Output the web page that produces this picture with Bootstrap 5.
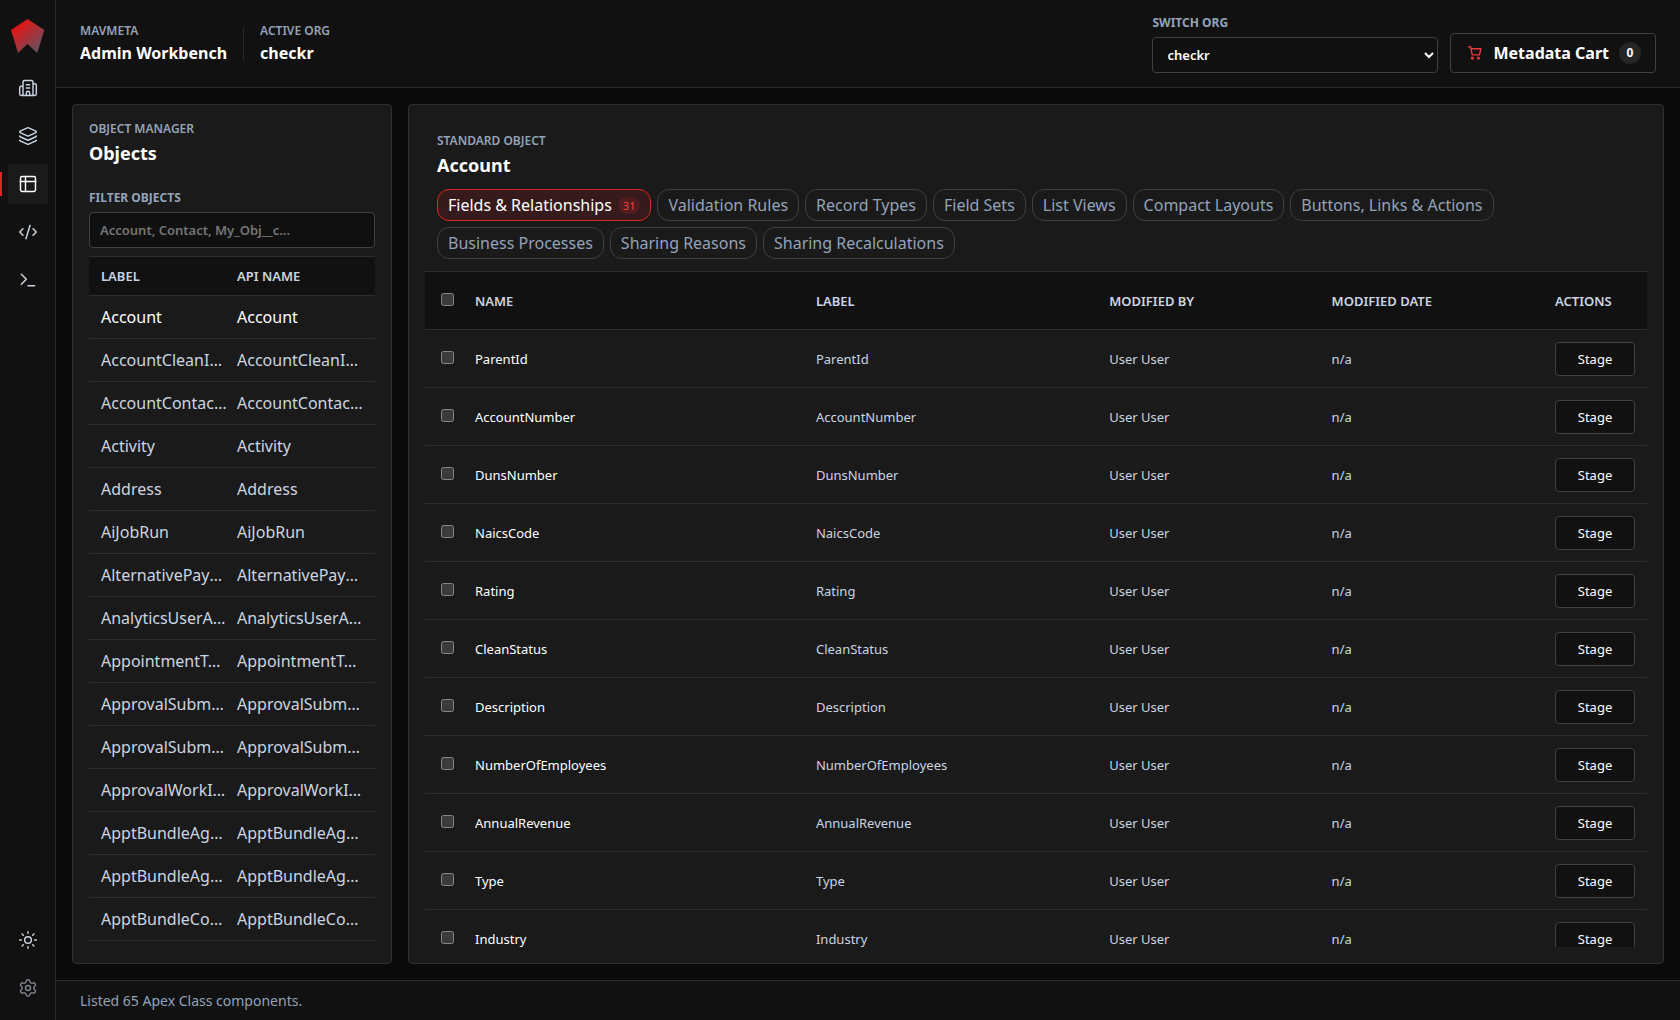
<!DOCTYPE html>
<html lang="en" data-bs-theme="dark">
<head>
<meta charset="utf-8">
<meta name="viewport" content="width=device-width, initial-scale=1">
<title>MavMeta Admin Workbench</title>
<link rel="stylesheet" href="https://cdn.jsdelivr.net/npm/bootstrap@5.3.0/dist/css/bootstrap.min.css">
<style>
  :root { color-scheme: dark; --line: #2a2a2a; --line-strong: #3f3f46; --bar: #111111; --panel: #1a1a1a; --muted: #94a3b8; --text: #cbd5e1; --accent: #dc2626; }
  body { background: #0a0a0a; color: var(--text); font-family: "Noto Sans", sans-serif; font-size: 16px; line-height: 24px; }
  svg { display: block; fill: none; stroke: currentColor; stroke-linecap: round; stroke-linejoin: round; }
  .shrinkable { min-width: 0; min-height: 0; }
  .rail { flex: 0 0 56px; background: var(--bar); border-right: 1px solid var(--line); padding: 18px 0 12px 8px; }
  .rail-logo { margin: 0 0 14px 1px; }
  .rail-link { display: flex; align-items: center; justify-content: center; width: 40px; height: 40px; border: 0; border-radius: 4px; background: none; color: var(--text); position: relative; padding: 0; }
  .rail-link svg { width: 20px; height: 20px; stroke-width: 1.75; }
  .rail-link.active { background: var(--panel); color: #fff; }
  .rail-link.active::before { content: ""; position: absolute; left: -8px; top: 8px; bottom: 8px; width: 2px; background: var(--accent); }
  .rail-link.dim { color: #7b8088; }
  .topbar { background: var(--bar); border-bottom: 1px solid var(--line); height: 88px; padding: 0 24px; }
  .eyebrow { font-size: 12px; line-height: 16px; font-weight: 600; color: var(--muted); text-transform: uppercase; margin: 0; }
  .field-label { font-size: 12px; line-height: 18px; font-weight: 700; color: var(--muted); text-transform: uppercase; margin: 0 0 5px; }
  .bar-title { font-size: 16px; line-height: 24px; font-weight: 700; color: #fff; margin: 2px 0 0; }
  .bar-rule { width: 1px; height: 32px; background: var(--line); }
  .control { background: #101010; border: 1px solid var(--line-strong); border-radius: 4px; color: #fff; font-size: 13px; font-weight: 600; height: 36px; padding: 0 10px; }
  .control::placeholder { color: #757575; opacity: 1; }
  .top-actions { gap: 12px; }
  .org-select { width: 286px; }
  .cart-btn { gap: 10px; height: 40px; background: var(--bar); border: 1px solid var(--line-strong); border-radius: 4px; color: #fff; font-weight: 700; padding: 0 14px 0 16px; }
  .cart-btn svg { width: 16px; height: 16px; stroke: #e5393b; }
  .cart-count { width: 22px; height: 22px; border-radius: 11px; background: #262626; font-size: 12px; line-height: 22px; text-align: center; }
  .panel { background: var(--panel); border: 1px solid #2e2e2e; border-radius: 4px; padding: 16px; }
  .panel-side { flex: 0 0 320px; }
  .panel-title { font-size: 18px; line-height: 24px; font-weight: 700; color: #fff; margin: 4px 0 0; }
  .clip { overflow: hidden; min-height: 0; flex: 1 1 0; }
  .grid { width: 100%; table-layout: fixed; border-collapse: separate; border-spacing: 0; }
  .grid th, .grid td { padding: 0 5px; border-bottom: 1px solid #2e2e2e; overflow: hidden; white-space: nowrap; text-overflow: ellipsis; vertical-align: middle; }
  .grid th { background: var(--bar); border-top: 1px solid #2e2e2e; font-size: 13px; font-weight: 600; text-transform: uppercase; color: var(--text); }
  .grid tr > :first-child { padding-left: 12px; }
  .grid tr > :last-child { padding-right: 12px; }
  .objects th { height: 40px; }
  .objects td { height: 43px; }
  .objects .current td { color: #fff; }
  .fields th { height: 59px; }
  .fields td { height: 58px; font-size: 13px; }
  .fields td:nth-child(2) { color: #fff; }
  .fields input { margin: 3px 3px 3px 4px; }
  .w-check { width: 45px; }
  .w-name { width: 27.9%; }
  .w-label { width: 24%; }
  .w-by { width: 18.2%; }
  .w-act { width: 97px; }
  .stage-btn { display: block; width: 80px; height: 34px; background: var(--bar); border: 1px solid var(--line-strong); border-radius: 4px; color: #fff; font-size: 13px; padding: 0; }
  .object-head { padding: 12px; }
  .tabs { gap: 6px; margin-top: 12px; }
  .tab-btn { display: flex; align-items: center; gap: 6px; height: 32px; border: 1px solid var(--line-strong); border-radius: 12px; background: none; color: var(--muted); padding: 0 10px; }
  .tab-btn.active { border-color: var(--accent); background: #371a1b; color: #fff; }
  .tab-count { font-size: 11px; line-height: 17px; border-radius: 9px; padding: 0 5px; background: #501c1d; color: #ef4444; }
  .statusbar { height: 40px; background: var(--bar); border-top: 1px solid var(--line); padding: 0 24px; font-size: 14px; color: var(--muted); }
</style>
</head>
<body>
<div class="d-flex vh-100 overflow-hidden">
  <nav class="rail d-flex flex-column" aria-label="Sections">
    <svg class="rail-logo" width="36" height="36" viewBox="0 0 36 36" role="img" aria-label="MavMeta">
      <defs><linearGradient id="lg" x1="0.1" y1="0.1" x2="0.85" y2="0.95"><stop offset="0" stop-color="#f20d0d"/><stop offset="1" stop-color="#64525f"/></linearGradient></defs>
      <path d="M18.500 1L35.300 12L28.300 35L18.500 26L9 35L2 12Z" fill="url(#lg)" stroke="none"/>
    </svg>
    <div class="d-flex flex-column gap-2">
      <a class="rail-link" href="#" aria-label="Orgs"><svg viewBox="0 0 24 24"><path d="M10 12h4M10 8h4M14 21v-3a2 2 0 0 0-4 0v3M6 10H4a2 2 0 0 0-2 2v7a2 2 0 0 0 2 2h16a2 2 0 0 0 2-2V9a2 2 0 0 0-2-2h-2M6 21V5a2 2 0 0 1 2-2h8a2 2 0 0 1 2 2v16"/></svg></a>
      <a class="rail-link" href="#" aria-label="Metadata"><svg viewBox="0 0 24 24"><path d="M12.830 2.180a2 2 0 0 0-1.660 0L2.600 6.080a1 1 0 0 0 0 1.830l8.580 3.910a2 2 0 0 0 1.660 0l8.580-3.900a1 1 0 0 0 0-1.830zM2 12a1 1 0 0 0 .58.91l8.600 3.910a2 2 0 0 0 1.650 0l8.580-3.900A1 1 0 0 0 22 12M2 17a1 1 0 0 0 .58.91l8.600 3.910a2 2 0 0 0 1.650 0l8.580-3.900A1 1 0 0 0 22 17"/></svg></a>
      <a class="rail-link active" href="#" aria-label="Object manager" aria-current="page"><svg viewBox="0 0 24 24"><rect x="3" y="3" width="18" height="18" rx="2"/><path d="M3 9h18M9 3v18"/></svg></a>
      <a class="rail-link" href="#" aria-label="Code"><svg viewBox="0 0 24 24"><path d="m18 16 4-4-4-4M6 8l-4 4 4 4M14.500 4l-5 16"/></svg></a>
      <a class="rail-link" href="#" aria-label="Terminal"><svg viewBox="0 0 24 24"><path d="M12 19h8M4 17l6-6-6-6"/></svg></a>
    </div>
    <div class="d-flex flex-column gap-2 mt-auto">
      <button class="rail-link" type="button" aria-label="Theme"><svg viewBox="0 0 24 24"><circle cx="12" cy="12" r="4"/><path d="M12 2v2M12 20v2M4.930 4.930l1.410 1.410M17.660 17.660l1.410 1.410M2 12h2M20 12h2M6.340 17.660l-1.410 1.410M19.070 4.930l-1.410 1.410"/></svg></button>
      <button class="rail-link dim" type="button" aria-label="Settings"><svg viewBox="0 0 24 24"><path d="M9.671 4.136a2.340 2.340 0 0 1 4.659 0 2.340 2.340 0 0 0 3.319 1.915 2.340 2.340 0 0 1 2.330 4.033 2.340 2.340 0 0 0 0 3.831 2.340 2.340 0 0 1-2.330 4.033 2.340 2.340 0 0 0-3.319 1.915 2.340 2.340 0 0 1-4.659 0 2.340 2.340 0 0 0-3.320-1.915 2.340 2.340 0 0 1-2.330-4.033 2.340 2.340 0 0 0 0-3.831A2.340 2.340 0 0 1 6.350 6.051a2.340 2.340 0 0 0 3.319-1.915"/><circle cx="12" cy="12" r="3"/></svg></button>
    </div>
  </nav>

  <div class="shrinkable d-flex flex-column flex-grow-1">
    <header class="topbar d-flex align-items-center justify-content-between flex-shrink-0">
      <div class="d-flex align-items-center gap-3">
        <div><p class="eyebrow">MavMeta</p><h1 class="bar-title">Admin Workbench</h1></div>
        <div class="bar-rule"></div>
        <div><p class="eyebrow">Active Org</p><p class="bar-title">checkr</p></div>
      </div>
      <div class="top-actions d-flex align-items-end">
        <div class="d-flex flex-column">
          <label class="field-label" for="org">Switch Org</label>
          <select class="control org-select" id="org"><option>checkr</option></select>
        </div>
        <button class="cart-btn d-flex align-items-center" type="button">
          <svg viewBox="0 0 16 16" stroke-width="1.4" aria-hidden="true"><path d="M1.600 1.700h1.900l.6 2h9.800l-1.400 6.200H5.200L3.500 1.700"/><circle cx="5.400" cy="13.200" r="0.900"/><circle cx="11.400" cy="13.200" r="0.900"/></svg>
          <span>Metadata Cart</span>
          <span class="cart-count">0</span>
        </button>
      </div>
    </header>

    <main class="shrinkable d-flex flex-grow-1 gap-3 p-3">
      <section class="panel panel-side shrinkable d-flex flex-column">
        <p class="eyebrow">Object Manager</p>
        <h2 class="panel-title">Objects</h2>
        <label class="field-label mt-4" for="filter">Filter Objects</label>
        <input class="control w-100 mb-2 flex-shrink-0" id="filter" type="text" placeholder="Account, Contact, My_Obj__c...">
        <div class="clip">
          <table class="grid objects">
            <thead><tr><th>Label</th><th>API Name</th></tr></thead>
            <tbody id="objectRows"></tbody>
          </table>
        </div>
      </section>

      <section class="panel shrinkable d-flex flex-column flex-grow-1">
        <div class="object-head">
          <p class="eyebrow">Standard Object</p>
          <h2 class="panel-title">Account</h2>
          <div class="tabs d-flex flex-wrap">
            <button class="tab-btn active" type="button">Fields &amp; Relationships <span class="tab-count">31</span></button>
            <button class="tab-btn" type="button">Validation Rules</button>
            <button class="tab-btn" type="button">Record Types</button>
            <button class="tab-btn" type="button">Field Sets</button>
            <button class="tab-btn" type="button">List Views</button>
            <button class="tab-btn" type="button">Compact Layouts</button>
            <button class="tab-btn" type="button">Buttons, Links &amp; Actions</button>
            <button class="tab-btn" type="button">Business Processes</button>
            <button class="tab-btn" type="button">Sharing Reasons</button>
            <button class="tab-btn" type="button">Sharing Recalculations</button>
          </div>
        </div>
        <div class="clip">
          <table class="grid fields">
            <colgroup><col class="w-check"><col class="w-name"><col class="w-label"><col class="w-by"><col><col class="w-act"></colgroup>
            <thead><tr><th><input type="checkbox" aria-label="Select all"></th><th>Name</th><th>Label</th><th>Modified By</th><th>Modified Date</th><th>Actions</th></tr></thead>
            <tbody id="fieldRows"></tbody>
          </table>
        </div>
      </section>
    </main>

    <footer class="statusbar d-flex align-items-center flex-shrink-0">Listed 65 Apex Class components.</footer>
  </div>
</div>
<script>
  const objects = ["Account", "AccountCleanInfo", "AccountContactRole", "Activity", "Address", "AiJobRun", "AlternativePaymentMethod", "AnalyticsUserAttrFuncTkn", "AppointmentTopicTimeSlot", "ApprovalSubmission", "ApprovalSubmissionDetail", "ApprovalWorkItem", "ApptBundleAggrDurDnscale", "ApptBundleAggrPolicy", "ApptBundleConfig"];
  document.getElementById("objectRows").innerHTML = objects.map((n, i) =>
    `<tr${i ? "" : ' class="current"'}><td>${n}</td><td>${n}</td></tr>`).join("");
  const fields = ["ParentId", "AccountNumber", "DunsNumber", "NaicsCode", "Rating", "CleanStatus", "Description", "NumberOfEmployees", "AnnualRevenue", "Type", "Industry"];
  document.getElementById("fieldRows").innerHTML = fields.map(n =>
    `<tr><td><input type="checkbox" aria-label="Select ${n}"></td><td>${n}</td><td>${n}</td><td>User User</td><td>n/a</td><td><button class="stage-btn" type="button">Stage</button></td></tr>`).join("");
</script>
<script src="https://cdn.jsdelivr.net/npm/bootstrap@5.3.0/dist/js/bootstrap.bundle.min.js"></script>
</body>
</html>
